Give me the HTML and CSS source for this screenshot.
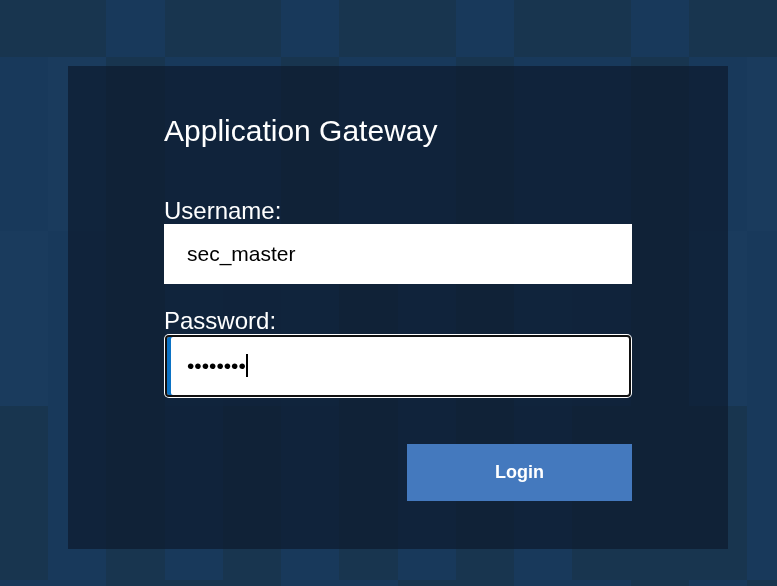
FILE: index.html
```html
<!DOCTYPE html>
<html lang="en">
<head>
<meta charset="utf-8">
<title>Application Gateway</title>
<link rel="stylesheet" href="styles.css">
</head>
<body>
<div class="mosaic" aria-hidden="true">
  <i class="d"></i><i class="d"></i><i class="b"></i><i class="d"></i><i class="d"></i><i class="b"></i><i class="d"></i><i class="d"></i><i class="b"></i><i class="d"></i><i class="d"></i><i class="b"></i><i class="d"></i><i class="d"></i>
  <i class="b"></i><i class="l"></i><i class="d"></i><i class="b"></i><i class="b"></i><i class="d"></i><i class="b"></i><i class="b"></i><i class="d"></i><i class="b"></i><i class="b"></i><i class="d"></i><i class="b"></i><i class="l"></i>
  <i class="l"></i><i class="b"></i><i class="d"></i><i class="l"></i><i class="b"></i><i class="l"></i><i class="d"></i><i class="b"></i><i class="d"></i><i class="l"></i><i class="b"></i><i class="d"></i><i class="l"></i><i class="b"></i>
  <i class="d"></i><i class="b"></i><i class="d"></i><i class="b"></i><i class="d"></i><i class="b"></i><i class="d"></i><i class="b"></i><i class="d"></i><i class="b"></i><i class="d"></i><i class="d"></i><i class="d"></i><i class="b"></i>
  <i class="b"></i><i class="b"></i><i class="d"></i><i class="d"></i><i class="d"></i><i class="b"></i><i class="b"></i><i class="d"></i><i class="d"></i><i class="b"></i><i class="b"></i><i class="d"></i><i class="b"></i><i class="d"></i>
</div>

<main class="page">
  <form class="card" onsubmit="return false">
    <h1 class="title">Application Gateway</h1>

    <label class="label" for="user">Username:</label>
    <input class="field" id="user" type="text" value="sec_master">

    <label class="label label-gap" for="pass">Password:</label>
    <div class="pass-wrap">
      <input class="field field-focus" id="pass" type="password" value="12345678">
      <span class="caret"></span>
    </div>

    <div class="actions">
      <button class="login" type="submit">Login</button>
    </div>
  </form>
</main>
</body>
</html>
```

FILE: styles.css
```css
html, body {
  margin: 0;
  padding: 0;
  height: 100%;
  overflow: hidden;
}

body {
  font-family: "Liberation Sans", Arial, sans-serif;
  background: #18354f;
}

.mosaic {
  position: fixed;
  top: -117.3px;
  left: -10.2px;
  display: grid;
  grid-template-columns: repeat(14, 58.25px);
  grid-auto-rows: 174.3px;
  z-index: -1;
}

.mosaic i { display: block; }
.mosaic .d { background: #18354f; }
.mosaic .b { background: #18395b; }
.mosaic .l { background: #1a3b5d; }

.page {
  padding: 66px 0 0 68px;
}

.card {
  box-sizing: border-box;
  width: 660px;
  padding: 48px 96px 48px 96px;
  background: rgba(12, 22, 40, 0.62);
  display: flex;
  flex-direction: column;
}

.title {
  margin: 0 0 49px 0;
  font-size: 30px;
  line-height: 34px;
  font-weight: normal;
  color: #ffffff;
}

.label {
  display: block;
  font-size: 24px;
  line-height: 27px;
  color: #ffffff;
}

.label-gap {
  margin-top: 23px;
}

.field {
  box-sizing: border-box;
  width: 468px;
  height: 60px;
  margin: 0;
  padding: 0 0 0 23px;
  border: none;
  outline: none;
  background: #ffffff;
  color: #000000;
  font-family: "Liberation Sans", Arial, sans-serif;
  font-size: 21px;
}

.pass-wrap {
  position: relative;
  width: 468px;
  height: 64px;
}

.field-focus {
  width: 466px;
  height: 62px;
  margin: 1px;
  padding-left: 20px;
  border: 2px solid #111111;
  border-radius: 4px;
  box-shadow: 0 0 0 1px #ffffff, inset 4px 0 0 #0b72c4;
  caret-color: transparent;
}

.caret {
  position: absolute;
  left: 82px;
  top: 20px;
  width: 2px;
  height: 23px;
  background: #000000;
}

.actions {
  display: flex;
  justify-content: flex-end;
  margin-top: 46px;
}

.login {
  width: 225px;
  height: 57px;
  border: none;
  background: #4479be;
  color: #ffffff;
  font-family: "Liberation Sans", Arial, sans-serif;
  font-size: 18px;
  font-weight: bold;
  cursor: pointer;
}
```
